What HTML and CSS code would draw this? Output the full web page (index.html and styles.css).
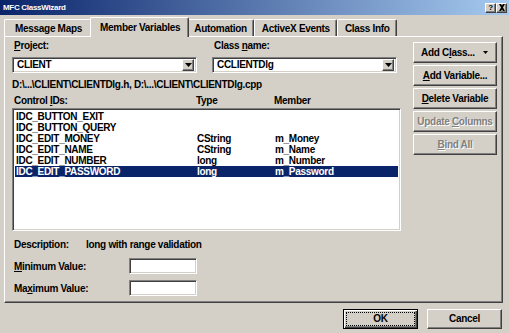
FILE: index.html
```html
<!DOCTYPE html>
<html>
	<head>
		<meta charset="utf-8">
		<title>MFC ClassWizard</title>
		<link rel="stylesheet" href="styles.css">
	</head>
	<body>
		<div class="window">
			<div class="titlebar">
				<span class="title">MFC ClassWizard</span>
				<div class="capbtns">
					<span class="capbtn">?</span>
					<span class="capbtn"><svg width="8" height="7" viewBox="0 0 8 7"><path d="M1 0h2l1 1.5L5 0h2L5 3.5 7 7H5L4 5.5 3 7H1l2-3.5z" fill="#000"/></svg></span>
				</div>
			</div>

			<div class="tabs">
				<div class="tab first">Message Maps</div>
				<div class="tab active">Member Variables</div>
				<div class="tab">Automation</div>
				<div class="tab">ActiveX Events</div>
				<div class="tab">Class Info</div>
			</div>

			<div class="panel">
				<div class="main">
					<div class="pickers">
						<div class="field">
							<div class="lbl"><u>P</u>roject:</div>
							<div class="combo sunken"><span class="val">CLIENT</span><span class="drop raised"><svg width="7" height="4" viewBox="0 0 7 4"><polygon points="0,0 7,0 3.5,4" fill="#000"/></svg></span></div>
						</div>
						<div class="field">
							<div class="lbl">Class <u>n</u>ame:</div>
							<div class="combo sunken"><span class="val">CCLIENTDlg</span><span class="drop raised"><svg width="7" height="4" viewBox="0 0 7 4"><polygon points="0,0 7,0 3.5,4" fill="#000"/></svg></span></div>
						</div>
					</div>
					<div class="path">D:\...\CLIENT\CLIENTDlg.h, D:\...\CLIENT\CLIENTDlg.cpp</div>
					<div class="cols">
						<span>Control <u>I</u>Ds:</span>
						<span>Type</span>
						<span>Member</span>
					</div>
					<div class="listbox sunken">
						<div class="row"><span>IDC_BUTTON_EXIT</span><span></span><span></span></div>
						<div class="row"><span>IDC_BUTTON_QUERY</span><span></span><span></span></div>
						<div class="row"><span>IDC_EDIT_MONEY</span><span>CString</span><span>m_Money</span></div>
						<div class="row"><span>IDC_EDIT_NAME</span><span>CString</span><span>m_Name</span></div>
						<div class="row"><span>IDC_EDIT_NUMBER</span><span>long</span><span>m_Number</span></div>
						<div class="row selected"><span>IDC_EDIT_PASSWORD</span><span>long</span><span>m_Password</span></div>
					</div>
					<div class="desc"><span>Description:</span><span>long with range validation</span></div>
					<div class="range">
						<span><u>M</u>inimum Value:</span>
						<span class="edit sunken"></span>
					</div>
					<div class="range">
						<span>Ma<u>x</u>imum Value:</span>
						<span class="edit sunken"></span>
					</div>
				</div>

				<div class="side">
					<div class="btn raised split"><span>Add C<u>l</u>ass...</span><svg width="5" height="3" viewBox="0 0 5 3"><polygon points="0,0 5,0 2.5,3" fill="#000"/></svg></div>
					<div class="btn raised"><span><u>A</u>dd Variable...</span></div>
					<div class="btn raised"><span><u>D</u>elete Variable</span></div>
					<div class="btn raised disabled"><span>Update <u>C</u>olumns</span></div>
					<div class="btn raised disabled"><span><u>B</u>ind All</span></div>
				</div>
			</div>

			<div class="footer">
				<div class="btn default"><span class="focus">OK</span></div>
				<div class="btn raised"><span>Cancel</span></div>
			</div>
		</div>
	</body>
</html>
```

FILE: styles.css
```css
body{
	margin: 0;
	background: #d4d0c8;
}
.window {
	width: 509px;
	height: 333px;
	background: #d4d0c8;
	font: bold 10px "Liberation Sans", Arial, sans-serif;
	letter-spacing: -0.3px;
	color: #000;
	overflow: hidden;
}
u {
	text-decoration: underline;
	text-underline-offset: 1px;
}

/* title bar */
.titlebar {
	height: 15px;
	display: flex;
	align-items: center;
	justify-content: space-between;
	padding: 0 2px 0 3px;
	background: linear-gradient(to right, #0a246a, #a6caf0);
}
.title {
	color: #fff;
	font-size: 8px;
}
.capbtns {
	display: flex;
}
.capbtn {
	width: 11px;
	height: 10px;
	box-sizing: border-box;
	display: flex;
	align-items: center;
	justify-content: center;
	background: #d4d0c8;
	font-size: 8px;
	line-height: 8px;
	border: 1px solid;
	border-color: #fff #404040 #404040 #fff;
	box-shadow: inset -1px -1px #808080;
}

/* 3d borders */
.raised {
	border: 1px solid;
	border-color: #fff #404040 #404040 #fff;
	box-shadow: inset -1px -1px #808080;
	background: #d4d0c8;
}
.sunken {
	border: 1px solid;
	border-color: #808080 #fff #fff #808080;
	box-shadow: inset 1px 1px #404040, inset -1px -1px #d4d0c8;
	background: #fff;
}

/* tabs */
.tabs {
	display: flex;
	align-items: flex-start;
	height: 20px;
	margin: 2px 0 -1px 4px;
	position: relative;
	z-index: 1;
}
.tab {
	height: 17px;
	margin-top: 2px;
	box-sizing: border-box;
	padding: 2px 6px 0 7px;
	line-height: 13px;
	border-top: 1px solid #fff;
	border-left: 1px solid #fff;
	border-right: 1px solid #404040;
	box-shadow: inset -1px 0 #808080;
	border-radius: 2px 2px 0 0;
	background: #d4d0c8;
}
.tab.first {
	padding: 2px 9px 0 10px;
}
.tab.active {
	height: 20px;
	margin: 0 -2px;
	padding: 3px 8px 0 9px;
	position: relative;
	z-index: 2;
}
.tab.active + .tab {
	border-left: none;
}

/* panel */
.panel {
	margin-left: 4px;
	width: 499px;
	height: 267px;
	box-sizing: border-box;
	border: 1px solid;
	border-color: #fff #404040 #404040 #fff;
	box-shadow: inset -1px -1px #808080;
	display: grid;
	grid-template-columns: 389px 84px;
	column-gap: 12px;
	padding: 3px 4px 0 7px;
}
.main {
	display: flex;
	flex-direction: column;
}
.pickers {
	display: grid;
	grid-template-columns: 185px 185px;
	column-gap: 15px;
}
.lbl {
	padding-left: 2px;
	line-height: 12px;
	height: 12px;
}
.combo {
	margin-top: 5px;
	height: 16px;
	box-sizing: border-box;
	display: flex;
	align-items: center;
	justify-content: space-between;
	padding: 2px;
}
.combo .val {
	padding-left: 2px;
	line-height: 12px;
}
.drop {
	width: 12px;
	height: 12px;
	box-sizing: border-box;
	display: flex;
	align-items: center;
	justify-content: center;
}
.path {
	margin-top: 6px;
	line-height: 12px;
}
.cols {
	margin-top: 4px;
	display: grid;
	grid-template-columns: 182px 78px 1fr;
	padding-left: 2px;
	line-height: 12px;
}
.listbox {
	margin-top: 1px;
	height: 123px;
	box-sizing: border-box;
	padding: 2px 2px 0 2px;
}
.row {
	display: grid;
	grid-template-columns: 181px 78px 1fr;
	padding-left: 1px;
	height: 11px;
	line-height: 11px;
}
.row.selected {
	background: #0a246a;
	color: #fff;
}
.desc {
	margin-top: 8px;
	display: grid;
	grid-template-columns: 72px 1fr;
	padding-left: 2px;
	line-height: 12px;
}
.range {
	display: grid;
	grid-template-columns: 115px 68px;
	align-items: center;
	padding-left: 2px;
	margin-top: 6px;
}
.desc + .range {
	margin-top: 7px;
}
.edit {
	height: 16px;
	box-sizing: border-box;
}

/* buttons */
.side {
	display: flex;
	flex-direction: column;
	gap: 2px;
	padding-top: 2px;
}
.btn {
	height: 21px;
	box-sizing: border-box;
	display: flex;
	align-items: center;
	justify-content: center;
	line-height: 12px;
}
.btn.split {
	justify-content: space-between;
	padding: 0 8px 0 7px;
}
.btn.disabled {
	color: #808080;
	text-shadow: 1px 1px #fff;
}
.footer {
	display: flex;
	justify-content: flex-end;
	gap: 9px;
	padding-right: 7px;
	margin-top: 6px;
}
.footer .btn {
	width: 75px;
	height: 20px;
}
.btn.default {
	border: 1px solid #000;
	box-shadow: inset 1px 1px #fff, inset -1px -1px #404040, inset -2px -2px #808080;
	padding: 3px;
}
.focus {
	flex: 1;
	align-self: stretch;
	display: flex;
	align-items: center;
	justify-content: center;
	outline: 1px dotted #000;
	outline-offset: 0;
}
```
